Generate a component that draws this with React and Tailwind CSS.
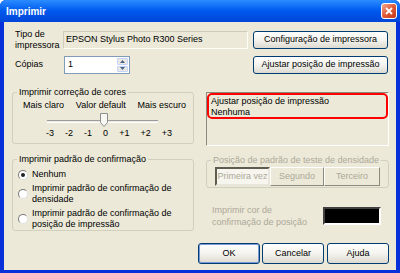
import React from "react";

function XpButton({ children, className = "", isDefault = false }) {
  return (
    <div
      className={
        "flex items-center justify-center rounded-[3px] border border-[#003c74] bg-gradient-to-b from-[#ffffff] via-[#f4f3ee] to-[#dcdad0] text-black " +
        (isDefault ? "shadow-[inset_0_0_0_1px_#7a98d4] " : "") +
        className
      }
    >
      {children}
    </div>
  );
}

function GroupBox({ title, disabled = false, className = "", children }) {
  return (
    <div className={"relative border border-[#d0d0bf] rounded-[3px] " + className}>
      <span
        className={
          "absolute -top-[7px] left-[4px] px-[2px] bg-[#ece9d8] leading-[12px] whitespace-nowrap " +
          (disabled ? "text-[#aca899]" : "text-black")
        }
      >
        {title}
      </span>
      {children}
    </div>
  );
}

function Radio({ checked, children }) {
  return (
    <div className="flex items-center gap-[4px]">
      <div className="w-[10px] h-[10px] shrink-0 rounded-full border border-[#7a7a7a] border-r-[#e0e0e0] border-b-[#e0e0e0] bg-white flex items-center justify-center">
        {checked && <div className="w-[4px] h-[4px] rounded-full bg-[#222]" />}
      </div>
      <div className="leading-[11px]">{children}</div>
    </div>
  );
}

export default function App() {
  return (
    <div
      className="w-[400px] h-[273px] flex flex-col bg-[#0831d9] rounded-t-[6px] overflow-hidden text-[9px] text-black"
      style={{ fontFamily: "'Liberation Sans', Arial, sans-serif" }}
    >
      {/* title bar */}
      <div className="h-[22px] shrink-0 flex items-center justify-between pl-[6px] pr-[3px] bg-gradient-to-b from-[#2b8cff] via-[#0058ee] to-[#0046d8]">
        <span className="text-white font-bold text-[10px]">Imprimir</span>
        <div className="w-[16px] h-[16px] rounded-[3px] border border-white bg-gradient-to-br from-[#f0a890] via-[#e05a38] to-[#c2391a] flex items-center justify-center">
          <svg width="8" height="8" viewBox="0 0 8 8">
            <path d="M1 1 L7 7 M7 1 L1 7" stroke="white" strokeWidth="1.8" />
          </svg>
        </div>
      </div>

      {/* body */}
      <div className="flex-1 mx-[4px] mb-[3px] bg-[#ece9d8] pl-[8px] pr-[7px] pt-[9px] flex flex-col">
        {/* row 1 */}
        <div className="flex items-center h-[18px]">
          <div className="w-[51px] leading-[11px] pl-[3px]">Tipo de impressora</div>
          <div className="w-[185px] h-[18px] flex items-center pl-[2px] border border-[#fcfcf9] border-t-[#cfccbe] border-l-[#cfccbe] whitespace-nowrap">
            EPSON Stylus Photo R300 Series
          </div>
          <XpButton className="ml-[5px] w-[135px] h-[18px]">Configuração de impressora</XpButton>
        </div>

        {/* row 2 */}
        <div className="flex items-center h-[18px] mt-[7px]">
          <div className="w-[52px] pl-[3px]">Cópias</div>
          <div className="w-[66px] h-[18px] flex items-center border border-[#7f9db9] bg-white">
            <span className="flex-1 pl-[3px]">1</span>
            <div className="w-[12px] h-full flex flex-col gap-px py-px pr-px">
              <div className="flex-1 bg-[#e9e8e1] border border-[#c3d3fd] rounded-[1px] flex items-center justify-center">
                <svg width="5" height="3" viewBox="0 0 5 3"><path d="M0 3 L2.5 0 L5 3 Z" fill="#4d6185" /></svg>
              </div>
              <div className="flex-1 bg-[#e9e8e1] border border-[#c3d3fd] rounded-[1px] flex items-center justify-center">
                <svg width="5" height="3" viewBox="0 0 5 3"><path d="M0 0 L2.5 3 L5 0 Z" fill="#4d6185" /></svg>
              </div>
            </div>
          </div>
          <XpButton className="ml-[123px] w-[135px] h-[18px]">Ajustar posição de impressão</XpButton>
        </div>

        {/* two columns */}
        <div className="flex gap-[12px] mt-[18px]">
          <div className="w-[182px] flex flex-col gap-[15px]">
            <GroupBox title="Imprimir correção de cores" className="h-[52px]">
              <div className="flex justify-between pl-[10px] pr-[7px] pt-[7px] leading-[11px]">
                <span>Mais claro</span>
                <span>Valor default</span>
                <span>Mais escuro</span>
              </div>
              <div className="relative h-[13px] ml-[34px] mr-[35px] mt-[2px]">
                <div className="absolute left-0 right-0 top-[7px] h-[3px] border-t border-[#9d9c99] border-b border-b-white bg-[#ecebe6]" />
                <svg className="absolute left-[53px] top-0" width="8" height="14" viewBox="0 0 8 14">
                  <path d="M0.5 0.5 H7.5 V9.5 L4 13.5 L0.5 9.5 Z" fill="#f7f7f4" stroke="#8e8f8f" />
                </svg>
              </div>
              <div className="flex justify-between pl-[33px] pr-[21px] mt-[2px] leading-[11px]">
                <span>-3</span>
                <span>-2</span>
                <span>-1</span>
                <span>0</span>
                <span>+1</span>
                <span>+2</span>
                <span>+3</span>
              </div>
            </GroupBox>

            <GroupBox title="Imprimir padrão de confirmação" className="h-[72px]">
              <div className="flex flex-col gap-[3px] pl-[5px] pt-[9px]">
                <Radio checked>Nenhum</Radio>
                <Radio>
                  Imprimir padrão de confirmação de
                  <br />
                  densidade
                </Radio>
                <Radio>
                  Imprimir padrão de confirmação de
                  <br />
                  posição de impressão
                </Radio>
              </div>
            </GroupBox>
          </div>

          <div className="w-[183px] flex flex-col">
            <div className="h-[54px] border border-white border-t-[#8c8a7f] border-l-[#8c8a7f]">
              <div className="h-[26px] border-2 border-[#ff0000] rounded-[5px] leading-[11px] pl-[2px] pt-[1px]">
                <div>Ajustar posição de impressão</div>
                <div>Nenhuma</div>
              </div>
            </div>

            <GroupBox title="Posição de padrão de teste de densidade" disabled className="h-[28px] mt-[14px]">
              <div className="flex px-[8px] pt-[6px]">
                <div className="w-[55px] h-[19px] flex items-center justify-center border-2 border-[#5e5c50] border-r-[#e8e6da] border-b-[#e8e6da] bg-[#f6f5ee] text-[#aca899]">
                  Primeira vez
                </div>
                <div className="w-[54px] h-[19px] flex items-center justify-center border border-[#8c8a7f] border-t-white border-l-white text-[#aca899]">
                  Segundo
                </div>
                <div className="w-[56px] h-[19px] flex items-center justify-center border border-[#8c8a7f] border-t-white border-l-white text-[#aca899]">
                  Terceiro
                </div>
              </div>
            </GroupBox>

            <div className="flex items-center mt-[16px] pl-[6px]">
              <div className="flex-1 text-[#aca899] leading-[12px]">
                Imprimir cor de
                <br />
                confirmação de posição
              </div>
              <div className="w-[58px] h-[18px] mr-[8px] bg-black border-2 border-[#404040] border-r-white border-b-white" />
            </div>
          </div>
        </div>

        {/* bottom buttons */}
        <div className="flex justify-end mt-auto mb-[6px]">
          <XpButton isDefault className="w-[62px] h-[21px]">OK</XpButton>
          <XpButton className="w-[62px] h-[21px] ml-[2px]">Cancelar</XpButton>
          <XpButton className="w-[62px] h-[21px] ml-[3px]">Ajuda</XpButton>
        </div>
      </div>
    </div>
  );
}
